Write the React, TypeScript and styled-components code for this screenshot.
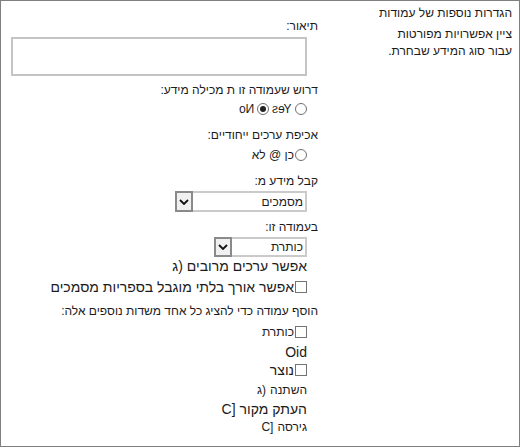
import React from 'react';
import styled, { createGlobalStyle } from 'styled-components';

const GlobalStyle = createGlobalStyle`
  html, body {
    margin: 0;
    padding: 0;
    background: #ffffff;
  }
  body {
    font-family: 'Liberation Sans', Arial, 'DejaVu Sans', sans-serif;
    color: #1b1b1b;
  }
`;

const Frame = styled.div`
  width: 520px;
  height: 447px;
  box-sizing: border-box;
  border: 1px solid #7f7f7f;
  display: flex;
  direction: rtl;
  background: #ffffff;
  overflow: hidden;
`;

const Side = styled.aside`
  width: 180px;
  flex: none;
  box-sizing: border-box;
  padding: 4px 7px 0 0;
  font-size: 12px;
`;

const SideTitle = styled.div`
  line-height: 16px;
`;

const SideText = styled.p`
  margin: 5px 0 0;
  line-height: 17px;
`;

const Main = styled.main`
  flex: 1;
  min-width: 0;
  padding: 17px 21px 0 10px;
  display: flex;
  flex-direction: column;
`;

const Label = styled.div<{ $top?: number; $size?: number }>`
  margin-top: ${(p) => p.$top ?? 0}px;
  font-size: ${(p) => p.$size ?? 12}px;
  line-height: ${(p) => ((p.$size ?? 12) > 12 ? 18 : 16)}px;
  white-space: nowrap;
`;

const Indented = styled(Label)`
  margin-right: 11px;
`;

/* rows whose prefix ("ג)", "C]") sits on the left of the Hebrew phrase */
const PrefixRow = styled(Indented)`
  display: flex;
  direction: ltr;
  justify-content: flex-end;
  gap: 4px;
`;

const Prefix = styled.span`
  direction: ltr;
  unicode-bidi: isolate;
`;

const Phrase = styled.span`
  direction: rtl;
  unicode-bidi: isolate;
`;

const TextArea = styled.textarea`
  margin-top: 3px;
  margin-right: 11px;
  height: 39px;
  box-sizing: border-box;
  border: 2px solid #c4c4c4;
  resize: none;
  outline: none;
  font: inherit;
`;

const OptionRow = styled.div<{ $top: number; $size?: number }>`
  margin-top: ${(p) => p.$top}px;
  margin-right: 11px;
  height: 18px;
  display: flex;
  align-items: center;
  gap: 1px;
  font-size: ${(p) => p.$size ?? 12}px;
  white-space: nowrap;
`;

const Radio = styled.span<{ $checked?: boolean }>`
  width: 12px;
  height: 12px;
  box-sizing: border-box;
  border: 1px solid #6f6f6f;
  border-radius: 50%;
  display: inline-flex;
  align-items: center;
  justify-content: center;
  flex: none;
  background: #ffffff;

  &::after {
    content: '';
    width: 6px;
    height: 6px;
    border-radius: 50%;
    background: ${(p) => (p.$checked ? '#222222' : 'transparent')};
  }
`;

const Mirrored = styled.span`
  display: inline-block;
  transform: scaleX(-1);
  margin: 0 2px;
`;

const Check = styled.span`
  width: 12px;
  height: 12px;
  box-sizing: border-box;
  border: 1px solid #737373;
  background: #ffffff;
  flex: none;
`;

const Select = styled.div<{ $width: number; $height: number; $top: number }>`
  margin-top: ${(p) => p.$top}px;
  margin-right: 11px;
  align-self: flex-start;
  width: ${(p) => p.$width}px;
  height: ${(p) => p.$height}px;
  box-sizing: border-box;
  border: 2px solid #cacaca;
  border-left: none;
  display: flex;
  align-items: center;
  font-size: 12px;
  background: #ffffff;
`;

const SelectValue = styled.span`
  flex: 1;
  text-align: right;
  padding-right: 2px;
`;

const SelectButton = styled.span`
  width: 18px;
  height: calc(100% + 4px);
  margin-top: -2px;
  margin-bottom: -2px;
  box-sizing: border-box;
  border: 2px solid #8a8a8a;
  background: #f0f0f0;
  display: flex;
  align-items: center;
  justify-content: center;
  flex: none;
`;

const Chevron = () => (
  <svg width="10" height="6" viewBox="0 0 10 6">
    <path d="M1 1 L5 5 L9 1" fill="none" stroke="#111" strokeWidth="1.8" />
  </svg>
);

export default function App() {
  return (
    <>
      <GlobalStyle />
      <Frame>
        <Side>
          <SideTitle>הגדרות נוספות של עמודות</SideTitle>
          <SideText>
            ציין אפשרויות מפורטות
            <br />
            עבור סוג המידע שבחרת.
          </SideText>
        </Side>

        <Main>
          <Label>תיאור:</Label>
          <TextArea />

          <Label $top={6}>דרוש שעמודה זו ת מכילה מידע:</Label>
          <OptionRow $top={2}>
            <Radio />
            <Mirrored>Yes</Mirrored>
            <Radio $checked />
            <Mirrored>No</Mirrored>
          </OptionRow>

          <Label $top={9}>אכיפת ערכים ייחודיים:</Label>
          <OptionRow $top={3}>
            <Radio />
            <span>כן @ לא</span>
          </OptionRow>

          <Label $top={9}>קבל מידע מ:</Label>
          <Select $top={2} $width={132} $height={21}>
            <SelectValue>מסמכים</SelectValue>
            <SelectButton>
              <Chevron />
            </SelectButton>
          </Select>

          <Label $top={7}>בעמודה זו:</Label>
          <Select $top={2} $width={93} $height={20}>
            <SelectValue>כותרת</SelectValue>
            <SelectButton>
              <Chevron />
            </SelectButton>
          </Select>

          <PrefixRow $size={14}>
            <Prefix>ג)</Prefix>
            <Phrase>אפשר ערכים מרובים</Phrase>
          </PrefixRow>
          <OptionRow $top={3} $size={14}>
            <Check />
            <span>אפשר אורך בלתי מוגבל בספריות מסמכים</span>
          </OptionRow>

          <Label $top={7}>הוסף עמודה כדי להציג כל אחד משדות נוספים אלה:</Label>
          <OptionRow $top={4}>
            <Check />
            <span>כותרת</span>
          </OptionRow>
          <Indented $top={2} $size={14}>Oid</Indented>
          <OptionRow $top={0} $size={14}>
            <Check />
            <span>נוצר</span>
          </OptionRow>
          <PrefixRow $top={3}>
            <Prefix>ג)</Prefix>
            <Phrase>השתנה</Phrase>
          </PrefixRow>
          <PrefixRow $top={2} $size={14}>
            <Prefix>C]</Prefix>
            <Phrase>העתק מקור</Phrase>
          </PrefixRow>
          <PrefixRow $top={1}>
            <Prefix>C]</Prefix>
            <Phrase>גירסה</Phrase>
          </PrefixRow>
        </Main>
      </Frame>
    </>
  );
}
